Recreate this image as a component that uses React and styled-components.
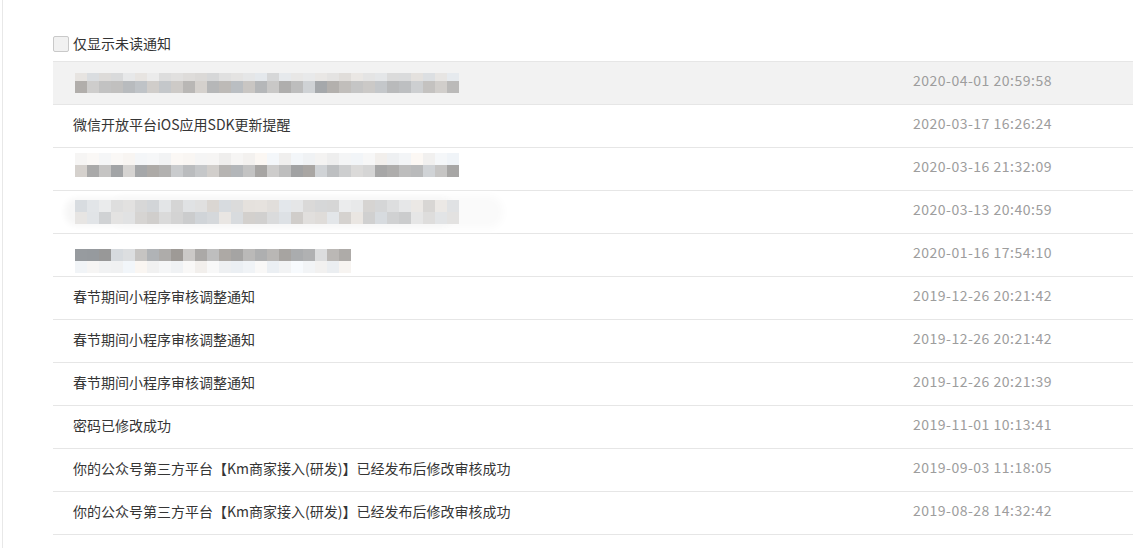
import React from 'react';
import styled, { createGlobalStyle } from 'styled-components';

const GlobalStyle = createGlobalStyle`
  html, body {
    margin: 0;
    padding: 0;
    background: #fff;
  }
  body {
    font-family: "Noto Sans CJK SC", "Noto Sans", sans-serif;
    overflow: hidden;
  }
`;

// gray values for the pixelated (blurred) titles, one string per band
const rand = (seed) => {
  let s = seed;
  return () => {
    s = (s * 9301 + 49297) % 233280;
    return s / 233280;
  };
};

const band = (seed, count, lo, hi) => {
  const r = rand(seed);
  return Array.from({ length: count }, () => {
    const v = Math.round(lo + (hi - lo) * r());
    const tint = Math.round((r() - 0.5) * 8);
    return `rgb(${v + tint}, ${v}, ${v - tint})`;
  });
};

const notices = [
  {
    blur: { bands: [[8, band(11, 32, 214, 236)], [12, band(23, 32, 168, 212)]], shift: 0 },
    time: '2020-04-01 20:59:58',
  },
  { title: '微信开放平台iOS应用SDK更新提醒', time: '2020-03-17 16:26:24' },
  {
    blur: { bands: [[12, band(37, 32, 238, 248)], [12, band(41, 32, 160, 218)]], shift: -9 },
    time: '2020-03-16 21:32:09',
  },
  {
    blur: { bands: [[12, band(53, 32, 212, 236)], [12, band(67, 32, 204, 232)]], shift: 0, halo: true },
    time: '2020-03-13 20:40:59',
  },
  {
    blur: { bands: [[12, band(71, 23, 152, 222)], [12, band(83, 23, 238, 250)]], shift: 11 },
    time: '2020-01-16 17:54:10',
  },
  { title: '春节期间小程序审核调整通知', time: '2019-12-26 20:21:42' },
  { title: '春节期间小程序审核调整通知', time: '2019-12-26 20:21:42' },
  { title: '春节期间小程序审核调整通知', time: '2019-12-26 20:21:39' },
  { title: '密码已修改成功', time: '2019-11-01 10:13:41' },
  { title: '你的公众号第三方平台【Km商家接入(研发)】已经发布后修改审核成功', time: '2019-09-03 11:18:05' },
  { title: '你的公众号第三方平台【Km商家接入(研发)】已经发布后修改审核成功', time: '2019-08-28 14:32:42' },
];

function Blur({ bands, shift, halo }) {
  return (
    <Mosaic $shift={shift} $halo={halo}>
      {bands.map(([h, cells], i) => (
        <Band key={i} $h={h}>
          {cells.map((c, j) => (
            <Cell key={j} style={{ background: c }} />
          ))}
        </Band>
      ))}
    </Mosaic>
  );
}

export default function App() {
  return (
    <Page>
      <GlobalStyle />
      <Content>
        <Filter>
          <Box />
          <span>仅显示未读通知</span>
        </Filter>
        <List>
          {notices.map((n, i) => (
            <Row key={i} $active={i === 0}>
              <Title>{n.blur ? <Blur {...n.blur} /> : <Text>{n.title}</Text>}</Title>
              <Time>{n.time}</Time>
            </Row>
          ))}
        </List>
      </Content>
    </Page>
  );
}

const Page = styled.div`
  margin-left: 2px;
  border-left: 1px solid #e8e8e8;
  min-height: 548px;
  box-sizing: border-box;
`;

const Content = styled.div`
  padding: 34px 0 0 50px;
`;

const Filter = styled.label`
  display: flex;
  align-items: center;
  gap: 4px;
  height: 18px;
  margin-bottom: 9px;
  font-size: 14px;
  color: #333;
  cursor: pointer;

  span:last-child {
    margin-top: -1px;
  }
`;

const Box = styled.span`
  display: inline-block;
  width: 14px;
  height: 14px;
  margin-top: 1px;
  border: 1px solid #c9c9c9;
  border-radius: 2px;
  background: #f1f1f1;
`;

const List = styled.div`
  border-top: 1px solid #e6e6e6;
`;

const Row = styled.div`
  display: flex;
  align-items: center;
  height: 42px;
  border-bottom: 1px solid #e6e6e6;
  background: ${(p) => (p.$active ? '#f2f2f2' : '#fff')};
  font-size: 14px;
`;

const Title = styled.div`
  flex: 1;
  min-width: 0;
  padding-left: 20px;
  color: #353535;
  white-space: nowrap;
  display: flex;
  align-items: center;
`;

const Text = styled.span`
  margin-bottom: 4px;
`;

const Time = styled.div`
  width: 220px;
  flex: none;
  margin-bottom: 6px;
  color: #9d9d9d;
  letter-spacing: 0.5px;
`;

const Mosaic = styled.div`
  display: flex;
  flex-direction: column;
  margin-left: 2px;
  margin-top: ${(p) => (p.$shift > 0 ? p.$shift : 0)}px;
  margin-bottom: ${(p) => (p.$shift < 0 ? -p.$shift : 0)}px;
  border-radius: 10px;
  box-shadow: ${(p) => (p.$halo ? '-8px 0 6px 2px #f6f6f6, 40px 0 8px 4px #fafafa' : 'none')};
`;

const Band = styled.div`
  display: flex;
  height: ${(p) => p.$h}px;
`;

const Cell = styled.span`
  width: 12px;
  height: 100%;
`;
